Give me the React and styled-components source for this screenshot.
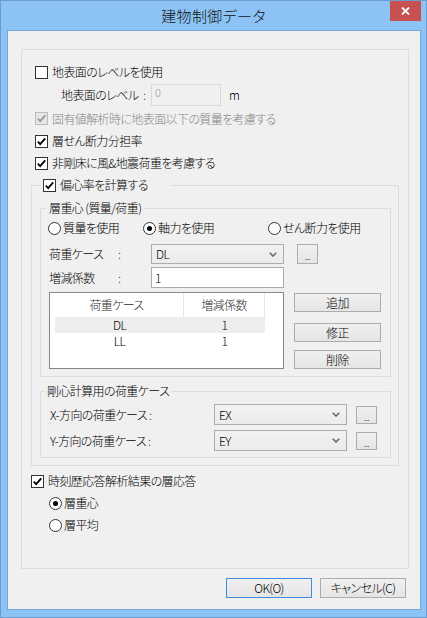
import styled, { createGlobalStyle } from "styled-components";

const GlobalStyle = createGlobalStyle`
  html, body {
    margin: 0;
    padding: 0;
    background: #fff;
  }
  body {
    font-family: "Noto Sans CJK JP", "Noto Sans", sans-serif;
    font-size: 12px;
    font-weight: 300;
    letter-spacing: -0.6px;
    color: #000;
    font-feature-settings: "palt";
  }
  * {
    box-sizing: border-box;
  }
`;

const Window = styled.div`
  width: 427px;
  height: 618px;
  border: 1px solid #6a9bd1;
  background: #8cc3f4;
  display: flex;
  flex-direction: column;
`;

const TitleBar = styled.div`
  height: 29px;
  flex: none;
  display: grid;
  grid-template-columns: 1fr auto 1fr;
  align-items: start;
`;

const Title = styled.div`
  grid-column: 2;
  font-size: 15px;
  line-height: 29px;
  letter-spacing: 0.4px;
  color: #111;
`;

const CloseButton = styled.div`
  grid-column: 3;
  justify-self: end;
  margin-right: 5px;
  width: 31px;
  height: 20px;
  background: #c75050;
  display: flex;
  align-items: center;
  justify-content: center;
`;

const Client = styled.div`
  height: 580px;
  margin: 0 5px 0 6px;
  border: 1px solid #77a6da;
  background: #f0f0f0;
  padding: 18px 11px 0 13px;
  display: flex;
  flex-direction: column;
`;

const OuterFrame = styled.div`
  height: 520px;
  border: 1px solid #dcdcdc;
  padding: 11px 9px 0 9px;
  display: flex;
  flex-direction: column;
`;

const Row = styled.div`
  height: ${(p) => p.$h || 22}px;
  margin-left: ${(p) => p.$indent || 0}px;
  margin-top: ${(p) => p.$mt || 0}px;
  display: flex;
  align-items: center;
  flex: none;
`;

const Option = styled.label`
  display: flex;
  align-items: center;
  gap: ${(p) => p.$gap ?? 4}px;
  line-height: 16px;
  white-space: nowrap;
  color: ${(p) => (p.$disabled ? "#858585" : "#000")};
`;

const Unit = styled.span`
  margin-left: 8px;
  line-height: 16px;
`;

const Box = styled.span`
  width: 13px;
  height: 13px;
  flex: none;
  border: 1px solid ${(p) => (p.$disabled ? "#bcbcbc" : "#333")};
  background: ${(p) => (p.$disabled ? "#e6e6e6" : "#fff")};
  display: flex;
  align-items: center;
  justify-content: center;
`;

const RadioCircle = styled.span`
  width: 13px;
  height: 13px;
  flex: none;
  border-radius: 50%;
  border: 1px solid #333;
  background: #fff;
  display: flex;
  align-items: center;
  justify-content: center;
  &::after {
    content: "";
    width: 5px;
    height: 5px;
    border-radius: 50%;
    background: ${(p) => (p.$on ? "#000" : "transparent")};
  }
`;

const Group = styled.fieldset`
  margin: ${(p) => p.$mt || 0}px 0 0 0;
  min-width: 0;
  border: 1px solid #dcdcdc;
  padding: ${(p) => p.$pad};
  display: flex;
  flex-direction: column;
`;

const Legend = styled.legend`
  height: ${(p) => p.$h || 20}px;
  width: ${(p) => (p.$w ? `${p.$w}px` : "auto")};
  margin-left: ${(p) => p.$ml || 0}px;
  padding: 0 ${(p) => p.$px ?? 3}px;
  display: flex;
  align-items: center;
  line-height: 16px;
  white-space: nowrap;
`;

const FieldLabel = styled.div`
  width: ${(p) => p.$w}px;
  margin-left: ${(p) => p.$ml || 0}px;
  display: flex;
  line-height: 16px;
  white-space: nowrap;
  flex: none;
`;

const LabelName = styled.span`
  width: ${(p) => p.$w}px;
  flex: none;
`;

const TextInput = styled.div`
  width: ${(p) => p.$w}px;
  height: ${(p) => p.$h || 21}px;
  border: 1px solid ${(p) => (p.$disabled ? "#d9d9d9" : "#ababab")};
  background: ${(p) => (p.$disabled ? "#f0f0f0" : "#fff")};
  color: ${(p) => (p.$disabled ? "#9a9a9a" : "#000")};
  font-size: ${(p) => (p.$disabled ? 11 : 12)}px;
  line-height: ${(p) => (p.$disabled ? 14 : 19)}px;
  padding-left: 3px;
  flex: none;
`;

const Combo = styled.div`
  width: ${(p) => p.$w}px;
  height: ${(p) => p.$h || 20}px;
  border: 1px solid #acacac;
  background: linear-gradient(#f2f2f2, #ebebeb);
  display: flex;
  align-items: center;
  justify-content: space-between;
  padding: 0 6px 0 4px;
  line-height: 16px;
  flex: none;
`;

const Button = styled.div`
  width: ${(p) => p.$w}px;
  height: ${(p) => p.$h || 20}px;
  margin-top: ${(p) => p.$mt || 0}px;
  margin-left: ${(p) => p.$ml || 0}px;
  border: 1px solid ${(p) => (p.$default ? "#3c8fdc" : "#acacac")};
  background: linear-gradient(#f0f0f0, #e5e5e5);
  display: flex;
  align-items: center;
  justify-content: center;
  line-height: 16px;
  flex: none;
  white-space: nowrap;
`;

const Dots = styled.span`
  font-size: 9px;
  line-height: 9px;
  margin-top: 5px;
  color: #222;
  letter-spacing: -0.5px;
`;

const RadioGrid = styled.div`
  height: 20px;
  display: grid;
  grid-template-columns: 95px 125px auto;
  align-items: center;
  flex: none;
`;

const ListArea = styled.div`
  margin-top: 4px;
  display: flex;
  flex: none;
`;

const ListBox = styled.div`
  width: 235px;
  height: 77px;
  margin-left: 1px;
  border: 1px solid #828790;
  background: #fff;
  flex: none;
`;

const ListHeader = styled.div`
  height: 24px;
  display: grid;
  grid-template-columns: 134px 81px 1fr;
`;

const HeaderCell = styled.div`
  display: flex;
  align-items: center;
  justify-content: center;
  border-right: ${(p) => (p.$last ? "none" : "1px solid #e5e5e5")};
  color: #2a2a2a;
  line-height: 16px;
`;

const ListRow = styled.div`
  height: 16px;
  width: 210px;
  margin-left: 5px;
  display: grid;
  grid-template-columns: 129px 81px;
  background: ${(p) => (p.$selected ? "#eeeeee" : "transparent")};
  line-height: 16px;
  text-align: center;
`;

const SideButtons = styled.div`
  margin-left: 10px;
  display: flex;
  flex-direction: column;
`;

const ButtonBar = styled.div`
  margin-top: 9px;
  padding-right: 3px;
  display: flex;
  justify-content: flex-end;
  gap: 8px;
`;

const Chevron = () => (
  <svg width="8" height="5" viewBox="0 0 8 5">
    <path d="M0.7 0.7 L4 4 L7.3 0.7" fill="none" stroke="#6b6b6b" strokeWidth="1.6" />
  </svg>
);

const Check = ({ disabled }) => (
  <svg width="11" height="11" viewBox="0 0 11 11">
    <path
      d="M1.8 5.6 L4.2 8.2 L9.2 2.4"
      fill="none"
      stroke={disabled ? "#9a9a9a" : "#000"}
      strokeWidth="1.8"
    />
  </svg>
);

const Checkbox = ({ checked, disabled, children }) => (
  <Option $disabled={disabled}>
    <Box $disabled={disabled}>{checked && <Check disabled={disabled} />}</Box>
    {children}
  </Option>
);

const Radio = ({ on, children }) => (
  <Option $gap={2}>
    <RadioCircle $on={on} />
    {children}
  </Option>
);

const DropDown = ({ w, h, value }) => (
  <Combo $w={w} $h={h}>
    <span>{value}</span>
    <Chevron />
  </Combo>
);

export default function App() {
  return (
    <>
      <GlobalStyle />
      <Window>
        <TitleBar>
          <Title>建物制御データ</Title>
          <CloseButton>
            <svg width="9" height="8" viewBox="0 0 9 8">
              <path d="M1 0.5 L8 7.5 M8 0.5 L1 7.5" stroke="#fff" strokeWidth="1.8" />
            </svg>
          </CloseButton>
        </TitleBar>

        <Client>
          <OuterFrame>
            <Row $indent={4}>
              <Checkbox>地表面のレベルを使用</Checkbox>
            </Row>
            <Row $indent={30} $h={24}>
              <FieldLabel $w={90}>
                <LabelName $w={82}>地表面のレベル</LabelName>:
              </FieldLabel>
              <TextInput $w={70} $h={22} $disabled>
                0
              </TextInput>
              <Unit>m</Unit>
            </Row>
            <Row $indent={4} $h={23}>
              <Checkbox checked disabled>
                固有値解析時に地表面以下の質量を考慮する
              </Checkbox>
            </Row>
            <Row $indent={4}>
              <Checkbox checked>層せん断力分担率</Checkbox>
            </Row>
            <Row $indent={4}>
              <Checkbox checked>非剛床に風&amp;地震荷重を考慮する</Checkbox>
            </Row>

            <Group $pad="2px 7px 7px 8px">
              <Legend $h={22} $w={129} $ml={1} $px={2}>
                <Checkbox checked>偏心率を計算する</Checkbox>
              </Legend>

              <Group $pad="0 6px 7px 7px">
                <Legend $ml={-2}>層重心 (質量/荷重)</Legend>
                <RadioGrid>
                  <Radio>質量を使用</Radio>
                  <Radio on>軸力を使用</Radio>
                  <Radio>せん断力を使用</Radio>
                </RadioGrid>
                <Row $mt={6} $h={20}>
                  <FieldLabel $w={102} $ml={1}>
                    <LabelName $w={69}>荷重ケース</LabelName>:
                  </FieldLabel>
                  <DropDown w={133} value="DL" />
                  <Button $w={21} $ml={13}>
                    <Dots>...</Dots>
                  </Button>
                </Row>
                <Row $mt={3} $h={21}>
                  <FieldLabel $w={102} $ml={1}>
                    <LabelName $w={69}>増減係数</LabelName>:
                  </FieldLabel>
                  <TextInput $w={133}>1</TextInput>
                </Row>
                <ListArea>
                  <ListBox>
                    <ListHeader>
                      <HeaderCell>荷重ケース</HeaderCell>
                      <HeaderCell>増減係数</HeaderCell>
                      <HeaderCell $last />
                    </ListHeader>
                    <ListRow $selected>
                      <span>DL</span>
                      <span>1</span>
                    </ListRow>
                    <ListRow>
                      <span>LL</span>
                      <span>1</span>
                    </ListRow>
                  </ListBox>
                  <SideButtons>
                    <Button $w={87} $h={19} $mt={1}>
                      追加
                    </Button>
                    <Button $w={87} $h={19} $mt={11}>
                      修正
                    </Button>
                    <Button $w={87} $h={19} $mt={8}>
                      削除
                    </Button>
                  </SideButtons>
                </ListArea>
              </Group>

              <Group $mt={4} $pad="3px 6px 6px 9px">
                <Legend $ml={-6}>剛心計算用の荷重ケース</Legend>
                <Row $h={21}>
                  <FieldLabel $w={164}>X-方向の荷重ケース :</FieldLabel>
                  <DropDown w={133} h={21} value="EX" />
                  <Button $w={21} $h={18} $ml={9}>
                    <Dots>...</Dots>
                  </Button>
                </Row>
                <Row $mt={5} $h={21}>
                  <FieldLabel $w={164}>Y-方向の荷重ケース :</FieldLabel>
                  <DropDown w={133} h={21} value="EY" />
                  <Button $w={21} $h={18} $ml={9}>
                    <Dots>...</Dots>
                  </Button>
                </Row>
              </Group>
            </Group>

            <Row $mt={4}>
              <Checkbox checked>時刻歴応答解析結果の層応答</Checkbox>
            </Row>
            <Row $indent={18}>
              <Radio on>層重心</Radio>
            </Row>
            <Row $indent={18}>
              <Radio>層平均</Radio>
            </Row>
          </OuterFrame>

          <ButtonBar>
            <Button $w={86} $default>
              OK(O)
            </Button>
            <Button $w={86}>キャンセル(C)</Button>
          </ButtonBar>
        </Client>
      </Window>
    </>
  );
}
